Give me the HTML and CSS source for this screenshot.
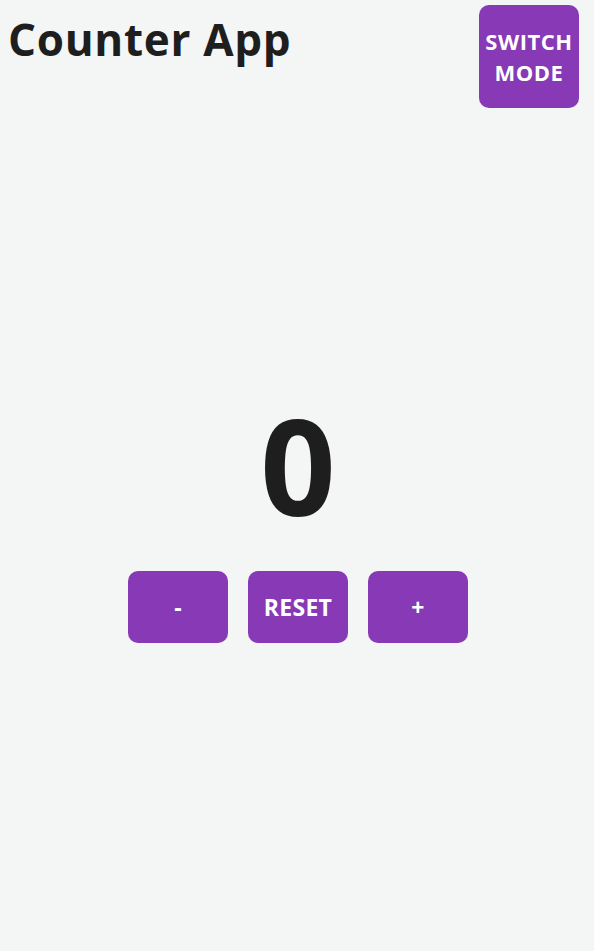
FILE: index.html
```html
<!DOCTYPE html>
<html lang="en">
<head>
<meta charset="utf-8">
<title>Counter App</title>
<link rel="stylesheet" href="styles.css">
</head>
<body>
<div class="app">
  <header class="header">
    <h1 class="title">Counter App</h1>
    <button class="btn btn-mode">SWITCH MODE</button>
  </header>
  <main class="main">
    <div class="count">0</div>
    <div class="controls">
      <button class="btn btn-ctrl">-</button>
      <button class="btn btn-ctrl">RESET</button>
      <button class="btn btn-ctrl">+</button>
    </div>
  </main>
</div>
</body>
</html>
```

FILE: styles.css
```css
* { box-sizing: border-box; }
html, body {
  margin: 0;
  padding: 0;
  height: 100%;
}
body {
  background: #f4f5f5;
  color: #1e1e1e;
  font-family: "Open Sans", "Noto Sans", sans-serif;
}
.app {
  min-height: 100vh;
  display: flex;
  flex-direction: column;
}
.header {
  display: flex;
  justify-content: space-between;
  align-items: flex-start;
  padding: 5px 15px 0 8px;
}
.title {
  margin: 8px 0 0 0;
  font-size: 44px;
  font-weight: 700;
  line-height: 1.2;
  letter-spacing: 0.7px;
}
.btn {
  background: #8839b5;
  color: #fff;
  border: none;
  border-radius: 10px;
  font-family: inherit;
  font-weight: 700;
  cursor: pointer;
}
.btn-mode {
  width: 100px;
  height: 103px;
  font-size: 22px;
  line-height: 31px;
  letter-spacing: 0.5px;
  padding: 0 2px;
}
.main {
  flex: 1;
  display: flex;
  flex-direction: column;
  align-items: center;
  justify-content: center;
  padding: 0 0 17px 2px;
}
.count {
  font-size: 132px;
  font-weight: 700;
  line-height: 1;
  margin-bottom: 40px;
}
.controls {
  display: flex;
  gap: 20px;
}
.btn-ctrl {
  width: 100px;
  height: 72px;
  font-size: 23px;
  padding: 0;
  letter-spacing: 0.3px;
}
```
